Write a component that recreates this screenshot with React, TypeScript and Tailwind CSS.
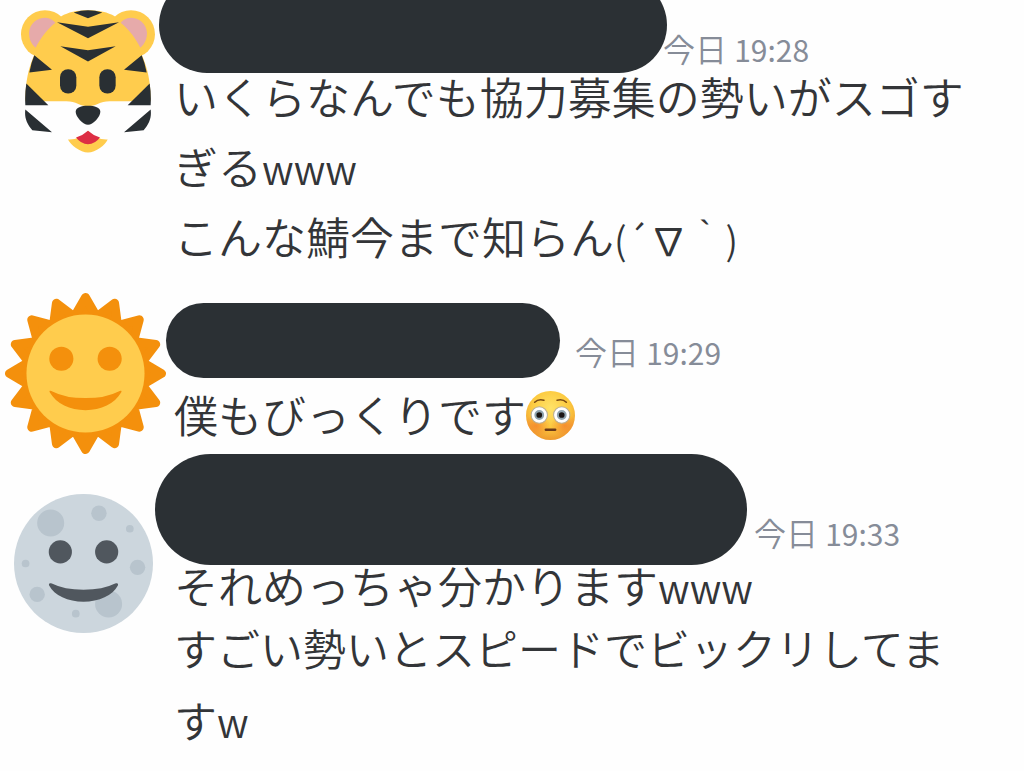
import type { ReactNode } from 'react';
import clsx from 'clsx';

function TigerAvatar() {
  return (
    <svg viewBox="64 30 402 428" className="w-[134px] h-[143px]" role="img" aria-label="トラ">
      <circle cx="136" cy="102" r="72" fill="#FFCC4D" />
      <circle cx="394" cy="102" r="72" fill="#FFCC4D" />
      <path
        fill="#E6AAAA"
        d="M108 143C92 130 88 112 88 98C90 70 112 53 138 53C150 54 160 59 167 68C140 90 122 115 108 143zM422 143C438 130 442 112 442 98C440 70 418 53 392 53C380 54 370 59 363 68C390 90 408 115 422 143z"
      />
      <path
        fill="#FFCC4D"
        d="M185 48C205 36 232 30 265 30C298 30 325 36 345 48L426 163C444 205 453 245 453 303L330 303C300 303 290 318 265 318C240 318 230 303 200 303L77 303C77 245 86 205 104 163z"
      />
      <path
        fill="#292F33"
        d="M222 37Q265 23 308 37L265 54zM172 66L265 80L358 66L265 114zM182 138L265 150L348 138L265 184zM104 165L157 209L89 217Q94 188 104 165zM426 165L373 209L441 217Q436 188 426 165zM80 250L146 315L77 315Q75 280 80 250zM450 250L384 315L453 315Q455 280 450 250zM77 328L157 396L98 390C80 370 74 350 77 328zM453 328L373 396L432 390C450 370 456 350 453 328z"
      />
      <rect x="181" y="207" width="49" height="73" rx="24" fill="#292F33" />
      <rect x="299" y="207" width="49" height="73" rx="24" fill="#292F33" />
      <path fill="#292F33" d="M228 335C228 322 245 317 265 317C285 317 302 322 302 335C302 350 280 374 265 374C250 374 228 350 228 335z" />
      <path fill="#FFCC4D" d="M205 418Q240 420 265 392Q290 420 324 418C318 434 288 457 265 457C242 457 212 434 205 418z" />
      <path fill="#DD2E44" d="M229 412Q250 406 265 392Q280 406 301 412Q286 432 265 432Q244 432 229 412z" />
    </svg>
  );
}

// 16 rays: tip and valley points alternate around the face
const rays = Array.from({ length: 32 }, (_, i) => {
  const r = i % 2 === 0 ? 17 : 12.9;
  const a = (i * Math.PI) / 16;
  return `${18 + r * Math.sin(a)},${18 - r * Math.cos(a)}`;
}).join(' ');

function SunAvatar() {
  return (
    <svg viewBox="0 0 36 36" className="size-[161px]" role="img" aria-label="太陽">
      <polygon points={rays} fill="#F4900C" stroke="#F4900C" strokeWidth="2" strokeLinejoin="round" />
      <circle cx="18" cy="18" r="13.2" fill="#FFCC4D" />
      <circle cx="12.6" cy="14.7" r="2.7" fill="#F4900C" />
      <circle cx="23.4" cy="14.7" r="2.7" fill="#F4900C" />
      <path fill="#F4900C" d="M10 22.2C9.8 21.8 10.2 21.8 10.6 22Q13.5 23.5 18 23.5Q22.5 23.5 25.4 22C25.8 21.8 26.2 21.8 26 22.2C24.5 24.8 21.5 26.2 18 26.2C14.5 26.2 11.5 24.8 10 22.2z" />
    </svg>
  );
}

function MoonAvatar() {
  return (
    <svg viewBox="0 0 36 36" className="size-[139px]" role="img" aria-label="月">
      <circle cx="18" cy="18" r="18" fill="#CCD6DD" />
      <g fill="#B8C4CD">
        <circle cx="9.5" cy="7.5" r="3.5" />
        <circle cx="22" cy="5" r="2" />
        <circle cx="30" cy="9" r="1" />
        <circle cx="32" cy="19" r="2" />
        <circle cx="3" cy="18" r="1" />
        <circle cx="6" cy="26" r="2" />
        <circle cx="16" cy="31" r="1" />
        <circle cx="24.5" cy="28.5" r="3.5" />
      </g>
      <g fill="#50575E">
        <circle cx="12" cy="15" r="3" />
        <circle cx="24" cy="15" r="3" />
        <path d="M9.1 23.7C8.9 23.1 9.3 23 9.8 23.2Q13 24.8 18 24.8Q23 24.8 26.2 23.2C26.7 23 27.1 23.1 26.9 23.7C25.6 26.3 22 27.9 18 27.9C14 27.9 10.4 26.3 9.1 23.7z" />
      </g>
    </svg>
  );
}

function FlushedFace() {
  return (
    <svg viewBox="0 0 48 48" className="inline-block size-[49px] align-[-7px]" role="img" aria-label="赤面">
      <defs>
        <radialGradient id="skin" cx="50%" cy="35%" r="65%">
          <stop offset="0" stopColor="#FFE368" />
          <stop offset="0.6" stopColor="#FCC93F" />
          <stop offset="1" stopColor="#EE9A2E" />
        </radialGradient>
        <radialGradient id="blush">
          <stop offset="0" stopColor="#F4802C" stopOpacity="0.75" />
          <stop offset="1" stopColor="#F4802C" stopOpacity="0" />
        </radialGradient>
        <clipPath id="head">
          <circle cx="24" cy="24" r="24" />
        </clipPath>
      </defs>
      <circle cx="24" cy="24" r="24" fill="url(#skin)" />
      <g clipPath="url(#head)">
        <ellipse cx="10" cy="34" rx="14" ry="11" fill="url(#blush)" />
        <ellipse cx="38" cy="34" rx="14" ry="11" fill="url(#blush)" />
      </g>
      <g fill="#FFFFFF" stroke="#B9AD93" strokeWidth="1">
        <circle cx="13" cy="23.5" r="8" />
        <circle cx="35" cy="23.5" r="8" />
      </g>
      <g fill="#1C1614" stroke="#8FA3AE" strokeWidth="2">
        <circle cx="13" cy="23.5" r="3.8" />
        <circle cx="35" cy="23.5" r="3.8" />
      </g>
      <g fill="none" stroke="#7A4A12" strokeWidth="1.6" strokeLinecap="round">
        <path d="M8.5 11Q12 7.5 17.5 9" />
        <path d="M39.5 11Q36 7.5 30.5 9" />
      </g>
      <path d="M19.5 38H28.5" stroke="#6B3A1A" strokeWidth="2.6" strokeLinecap="round" />
    </svg>
  );
}

// Latin laughter is set a little smaller than the kana beside it
function Laugh({ children }: { children: string }) {
  return <span className="text-[40px] leading-none">{children}</span>;
}

type MessageProps = {
  avatar: ReactNode;
  avatarClass: string;
  headerClass: string;
  nameClass: string;
  timeClass: string;
  time: string;
  className?: string;
  children: ReactNode;
};

function Message({ avatar, avatarClass, headerClass, nameClass, timeClass, time, className, children }: MessageProps) {
  return (
    <article className={clsx('flex items-start', className)}>
      <div className={clsx('w-[174px] shrink-0', avatarClass)}>{avatar}</div>
      <div className="min-w-0 flex-1 pr-12">
        <header className={clsx('flex items-end', headerClass)}>
          {/* Hidden user name */}
          <div className={clsx('shrink-0 rounded-full bg-[#2b3034]', nameClass)} />
          <time className={clsx('whitespace-nowrap text-[32px] leading-8 text-[#868c98]', timeClass)}>
            今日 <span className="text-[30px] font-normal">{time}</span>
          </time>
        </header>
        {children}
      </div>
    </article>
  );
}

export default function App() {
  return (
    <main className="min-h-screen overflow-hidden bg-[#fefefe] font-['Noto_Sans_CJK_JP',sans-serif] font-[350] text-[44px] leading-[70px] text-[#333538]">
      <Message
        avatar={<TigerAvatar />}
        avatarClass="pl-[21px] pt-[10px]"
        headerClass="-ml-[15px]"
        nameClass="-mt-[23px] h-24 w-[508px]"
        timeClass="-ml-1 pb-2"
        time="19:28"
      >
        <p className="-mt-3">
          いくらなんでも協力募集の勢いがスゴすぎる<Laugh>www</Laugh>
        </p>
        <p>
          こんな鯖今まで知らん
          <span className="text-[38px] leading-none">
            (´<span className="font-normal">∇</span>｀)
          </span>
        </p>
      </Message>

      <Message
        className="pt-[22px]"
        avatar={<SunAvatar />}
        avatarClass="pl-[5px]"
        headerClass="-ml-2 pt-[10px]"
        nameClass="h-[75px] w-[394px]"
        timeClass="ml-[15px] pb-[10px]"
        time="19:29"
      >
        <p className="pt-px">
          僕もびっくりです
          <FlushedFace />
        </p>
      </Message>

      <Message
        avatar={<MoonAvatar />}
        avatarClass="pl-[14px] pt-10"
        headerClass="-ml-[19px]"
        nameClass="h-[111px] w-[592px]"
        timeClass="ml-[7px] pb-4"
        time="19:33"
      >
        <p className="-mt-[6px] leading-[52px]">
          それめっちゃ分かります<Laugh>www</Laugh>
        </p>
        <p className="text-[43px] leading-[72px]">
          すごい勢いとスピードでビックリしてます<Laugh>w</Laugh>
        </p>
      </Message>
    </main>
  );
}
